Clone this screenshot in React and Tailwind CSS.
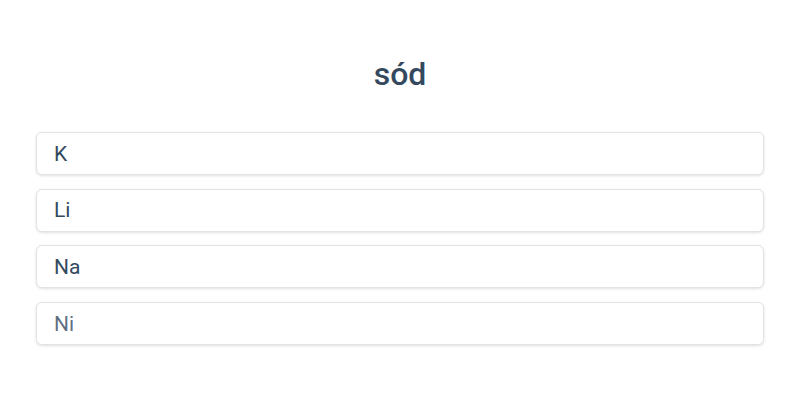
import React from "react";

const items = [
  { label: "K", faded: false },
  { label: "Li", faded: false },
  { label: "Na", faded: false },
  { label: "Ni", faded: true },
];

export default function App() {
  return (
    <div className="w-[800px] h-[400px] bg-white px-9 pt-[54px] font-['Roboto',sans-serif]">
      <h1 className="text-center text-[32px] leading-[40px] font-medium text-[#34495e]">
        sód
      </h1>
      <div className="mt-[38px] flex flex-col gap-[13.67px]">
        {items.map((item) => (
          <div
            key={item.label}
            className={
              "h-[43px] flex items-center px-[17px] pt-[2px] rounded-md border border-[#e3e3e3] shadow-[0_1px_3px_rgba(0,0,0,0.12)] bg-white text-[21px] " +
              (item.faded ? "text-[#34495e]/80" : "text-[#34495e]")
            }
          >
            {item.label}
          </div>
        ))}
      </div>
    </div>
  );
}
